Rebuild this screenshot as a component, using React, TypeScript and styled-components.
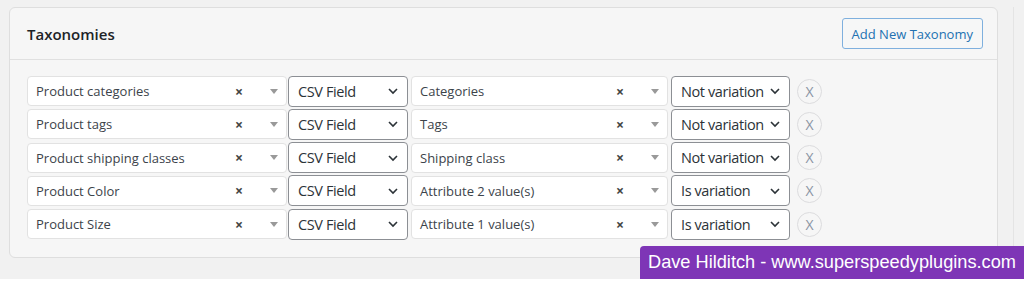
import React from 'react';
import styled, { createGlobalStyle } from 'styled-components';

interface TaxonomyRow {
  taxonomy: string;
  field: string;
  variation: string;
}

const GlobalStyle = createGlobalStyle`
  body {
    margin: 0;
    background: #ffffff;
    font-family: "Open Sans", "Noto Sans", sans-serif;
  }
`;

const Screen = styled.div`
  position: relative;
  width: 1024px;
  height: 279px;
  background: #f1f1f1;
  box-sizing: border-box;
  padding: 7px 0 0 9px;
  display: flex;
`;

const Main = styled.div`
  width: 1005px;
  border-right: 1px solid #e4e4e4;
  box-sizing: border-box;
`;

const Panel = styled.section`
  width: 989px;
  height: 251px;
  box-sizing: border-box;
  background: #f6f6f6;
  border: 1px solid #dedede;
  border-radius: 6px;
`;

const PanelHeader = styled.header`
  height: 52px;
  box-sizing: border-box;
  display: flex;
  align-items: center;
  justify-content: space-between;
  padding: 0 14px 0 17px;
  border-bottom: 1px solid #e0e0e0;
`;

const Title = styled.h2`
  margin: 0;
  font-size: 15px;
  font-weight: 600;
  color: #1d2327;
`;

const AddButton = styled.button`
  height: 31px;
  padding: 0 9px;
  background: #f6f7f7;
  border: 1px solid #7fb0de;
  border-radius: 3px;
  color: #2271b1;
  font-family: "Open Sans", "Noto Sans", sans-serif;
  font-size: 13px;
`;

const PanelBody = styled.div`
  padding: 16px 17px 0;
  display: flex;
  flex-direction: column;
  gap: 3.3px;
`;

const Row = styled.div`
  display: flex;
  align-items: center;
  height: 30px;
`;

const Combo = styled.div<{ $width: number; $after: number }>`
  width: ${p => p.$width}px;
  margin-right: ${p => p.$after}px;
  height: 30px;
  box-sizing: border-box;
  background: #ffffff;
  border: 1px solid #e2e2e2;
  border-radius: 4px;
  display: flex;
  align-items: center;
  padding: 0 8px;
  font-size: 13px;
  color: #3c434a;
  white-space: nowrap;
`;

const ComboText = styled.span`
  flex: 1;
`;

const Clear = styled.span`
  font-size: 14px;
  font-weight: 700;
  color: #444;
  margin-right: 27px;
`;

const Caret = styled.span`
  width: 0;
  height: 0;
  border-left: 4.5px solid transparent;
  border-right: 4.5px solid transparent;
  border-top: 5px solid #999;
`;

const NativeSelect = styled.div<{ $width: number; $after: number }>`
  width: ${p => p.$width}px;
  margin-right: ${p => p.$after}px;
  height: 31px;
  box-sizing: border-box;
  background: #ffffff;
  border: 1px solid #8c8f94;
  border-radius: 4px;
  display: flex;
  align-items: center;
  justify-content: space-between;
  padding: 0 8px 0 9px;
  font-size: 14.5px;
  letter-spacing: -0.4px;
  color: #2c3338;
  white-space: nowrap;
`;

const Chevron = styled.svg`
  width: 12px;
  height: 12px;
  flex-shrink: 0;
`;

const RemoveButton = styled.button`
  width: 25px;
  height: 25px;
  margin-left: 7px;
  border-radius: 50%;
  border: 1px solid #dcdcde;
  background: #f6f6f6;
  color: #8a93a3;
  font-family: "Open Sans", "Noto Sans", sans-serif;
  font-size: 14px;
  padding: 0;
  display: flex;
  align-items: center;
  justify-content: center;
`;

const Watermark = styled.div`
  position: absolute;
  left: 640px;
  top: 246px;
  width: 384px;
  height: 33px;
  box-sizing: border-box;
  background: #7e35b6;
  border-radius: 4px 0 0 0;
  color: #ffffff;
  font-family: "Liberation Sans", Arial, sans-serif;
  font-size: 18.2px;
  white-space: nowrap;
  padding-left: 8px;
  display: flex;
  align-items: center;
`;

const rows: TaxonomyRow[] = [
  { taxonomy: 'Product categories', field: 'Categories', variation: 'Not variation' },
  { taxonomy: 'Product tags', field: 'Tags', variation: 'Not variation' },
  { taxonomy: 'Product shipping classes', field: 'Shipping class', variation: 'Not variation' },
  { taxonomy: 'Product Color', field: 'Attribute 2 value(s)', variation: 'Is variation' },
  { taxonomy: 'Product Size', field: 'Attribute 1 value(s)', variation: 'Is variation' },
];

const Down: React.FC = () => (
  <Chevron viewBox="0 0 12 12">
    <path d="M2 4l4 4 4-4" fill="none" stroke="#2c3338" strokeWidth="1.6" />
  </Chevron>
);

const App: React.FC = () => (
  <>
    <GlobalStyle />
    <Screen>
      <Main>
        <Panel>
          <PanelHeader>
            <Title>Taxonomies</Title>
            <AddButton>Add New Taxonomy</AddButton>
          </PanelHeader>
          <PanelBody>
            {rows.map(row => (
              <Row key={row.taxonomy}>
                <Combo $width={260} $after={1}>
                  <ComboText>{row.taxonomy}</ComboText>
                  <Clear>×</Clear>
                  <Caret />
                </Combo>
                <NativeSelect $width={120} $after={3}>
                  CSV Field
                  <Down />
                </NativeSelect>
                <Combo $width={257} $after={3}>
                  <ComboText>{row.field}</ComboText>
                  <Clear>×</Clear>
                  <Caret />
                </Combo>
                <NativeSelect $width={119} $after={0}>
                  {row.variation}
                  <Down />
                </NativeSelect>
                <RemoveButton>X</RemoveButton>
              </Row>
            ))}
          </PanelBody>
        </Panel>
      </Main>
      <Watermark>Dave Hilditch - www.superspeedyplugins.com</Watermark>
    </Screen>
  </>
);

export default App;
